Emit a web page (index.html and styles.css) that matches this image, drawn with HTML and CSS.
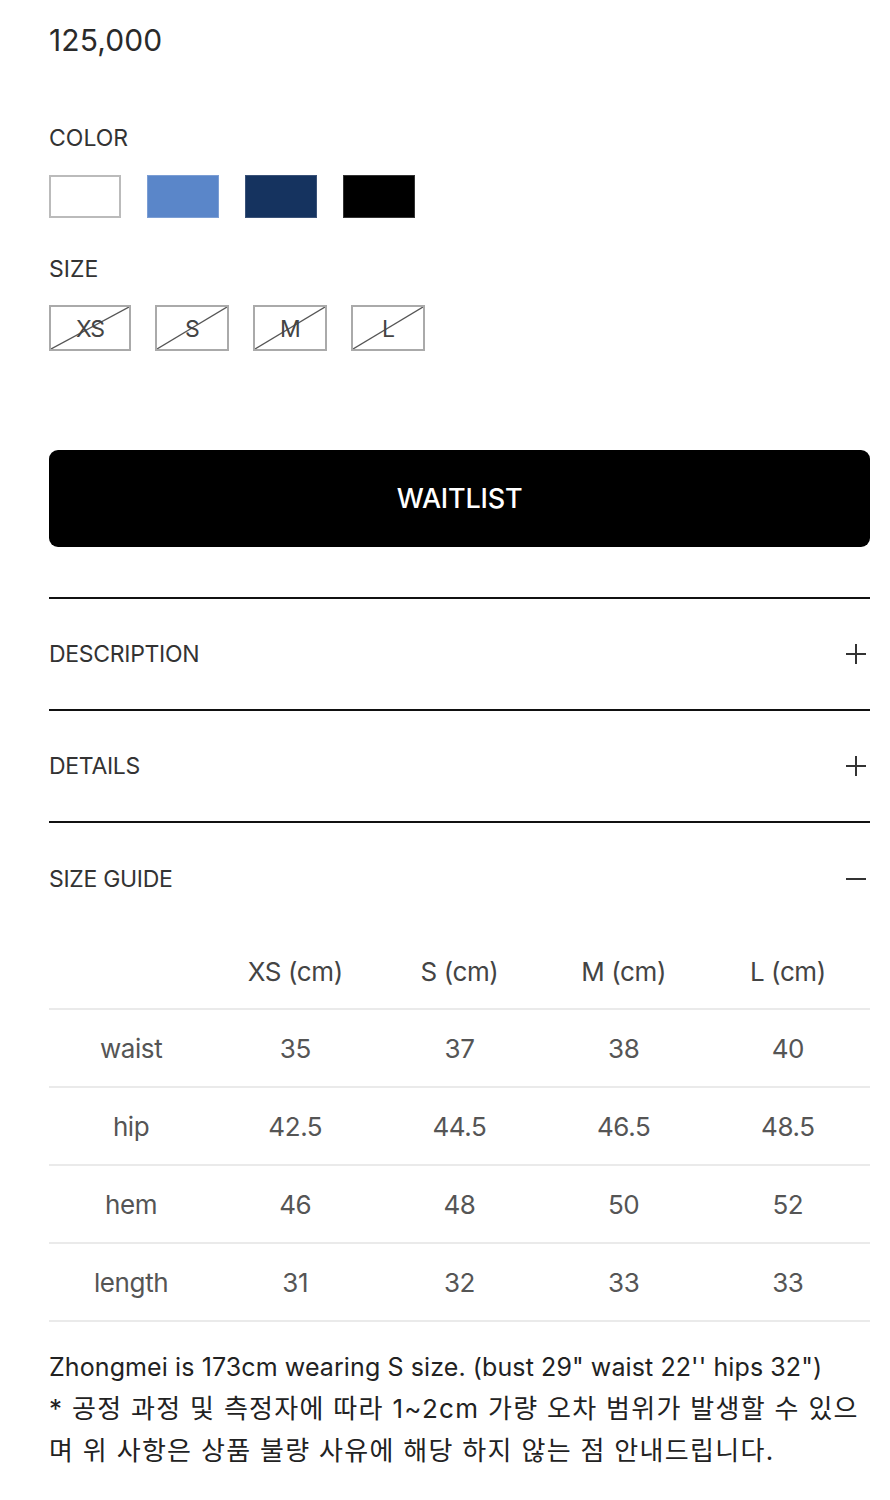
FILE: index.html
```html
<!DOCTYPE html>
<html lang="ko">
<head>
<meta charset="utf-8">
<link rel="stylesheet" href="styles.css">
</head>
<body>
<main class="product">
  <div class="price">125,000</div>

  <div class="opt-label color-label">COLOR</div>
  <div class="swatches">
    <span class="swatch sw-white"></span>
    <span class="swatch sw-blue"></span>
    <span class="swatch sw-navy"></span>
    <span class="swatch sw-black"></span>
  </div>

  <div class="opt-label size-label">SIZE</div>
  <div class="sizes">
    <span class="size size-xs"><svg class="slash" viewBox="0 0 100 100" preserveAspectRatio="none"><line x1="0" y1="100" x2="100" y2="0"/></svg><span class="size-txt">XS</span></span>
    <span class="size"><svg class="slash" viewBox="0 0 100 100" preserveAspectRatio="none"><line x1="0" y1="100" x2="100" y2="0"/></svg><span class="size-txt">S</span></span>
    <span class="size"><svg class="slash" viewBox="0 0 100 100" preserveAspectRatio="none"><line x1="0" y1="100" x2="100" y2="0"/></svg><span class="size-txt">M</span></span>
    <span class="size"><svg class="slash" viewBox="0 0 100 100" preserveAspectRatio="none"><line x1="0" y1="100" x2="100" y2="0"/></svg><span class="size-txt">L</span></span>
  </div>

  <button class="waitlist">WAITLIST</button>

  <section class="acc">
    <div class="acc-head"><span>DESCRIPTION</span><span class="pm plus"></span></div>
  </section>
  <section class="acc">
    <div class="acc-head"><span>DETAILS</span><span class="pm plus"></span></div>
  </section>
  <section class="acc acc-open">
    <div class="acc-head"><span>SIZE GUIDE</span><span class="pm minus"></span></div>
    <table class="guide">
      <thead>
        <tr><th></th><th>XS (cm)</th><th>S (cm)</th><th>M (cm)</th><th>L (cm)</th></tr>
      </thead>
      <tbody>
        <tr><td>waist</td><td>35</td><td>37</td><td>38</td><td>40</td></tr>
        <tr><td>hip</td><td>42.5</td><td>44.5</td><td>46.5</td><td>48.5</td></tr>
        <tr><td>hem</td><td>46</td><td>48</td><td>50</td><td>52</td></tr>
        <tr><td>length</td><td>31</td><td>32</td><td>33</td><td>33</td></tr>
      </tbody>
    </table>
    <p class="note">Zhongmei is 173cm wearing S size. (bust 29" waist 22'' hips 32")<br><span class="ko">* 공정 과정 및 측정자에 따라 1~2cm 가량 오차 범위가 발생할 수 있으며 위 사항은 상품 불량 사유에 해당 하지 않는 점 안내드립니다.</span></p>
  </section>
</main>
</body>
</html>
```

FILE: styles.css
```css
html, body {
  margin: 0;
  padding: 0;
  background: #fff;
}
body {
  font-family: Inter, "Noto Sans CJK KR", sans-serif;
  color: #222;
}
.product {
  width: 821px;
  margin-left: 49px;
  display: flex;
  flex-direction: column;
}
.price {
  font-size: 30px;
  line-height: 40px;
  margin-top: 20px;
  color: #2a2a2a;
  letter-spacing: 0.1px;
}
.opt-label {
  font-size: 23px;
  line-height: 30px;
  color: #333;
  letter-spacing: 0;
}
.color-label { margin-top: 63px; }
.swatches {
  display: flex;
  gap: 26px;
  margin-top: 22px;
}
.swatch {
  width: 72px;
  height: 43px;
  box-sizing: border-box;
  display: block;
}
.sw-white { border: 2px solid #bbb; background: #fff; }
.sw-blue { background: #5a86c9; border: 1px solid #7c9ed4; }
.sw-navy { background: #15335f; border: 1px solid #3a5278; }
.sw-black { background: #000; border: 1px solid #333; }
.size-label { margin-top: 36px; }
.sizes {
  display: flex;
  gap: 24px;
  margin-top: 21px;
}
.size {
  position: relative;
  width: 74px;
  height: 46px;
  box-sizing: border-box;
  border: 2px solid #aaa;
  display: flex;
  align-items: center;
  justify-content: center;
}
.size-xs { width: 82px; }
.slash {
  position: absolute;
  inset: 0;
  width: 100%;
  height: 100%;
}
.slash line {
  stroke: #555;
  stroke-width: 1.3;
  vector-effect: non-scaling-stroke;
}
.size-txt {
  font-size: 23px;
  color: #444;
  letter-spacing: -1px;
  position: relative;
  top: 1px;
}
.waitlist {
  margin-top: 99px;
  height: 97px;
  width: 100%;
  border: none;
  border-radius: 9px;
  background: #000;
  color: #fff;
  font-family: Inter, "Noto Sans CJK KR", sans-serif;
  font-size: 27px;
  font-weight: 500;
  letter-spacing: -0.2px;
  padding: 0;
}
.acc {
  border-top: 2px solid #111;
}
.acc:first-of-type { margin-top: 50px; }
.acc-head {
  height: 110px;
  display: flex;
  align-items: center;
  justify-content: space-between;
  font-size: 23px;
  color: #333;
  letter-spacing: -0.3px;
}
.pm {
  position: relative;
  width: 20px;
  height: 20px;
  margin-right: 4px;
}
.pm::before, .plus::after {
  content: "";
  position: absolute;
  background: #333;
}
.pm::before {
  left: 0;
  top: 9px;
  width: 20px;
  height: 2px;
}
.plus::after {
  left: 9px;
  top: 0;
  width: 2px;
  height: 20px;
}
.acc-open .acc-head { height: 112px; }
.guide {
  width: 100%;
  border-collapse: collapse;
  table-layout: fixed;
  margin-top: 0;
}
.guide th, .guide td {
  text-align: center;
  font-weight: normal;
  font-size: 26px;
  letter-spacing: -0.4px;
  padding: 0;
}
.guide th {
  height: 73px;
  color: #444;
  vertical-align: middle;
  border-bottom: 2px solid #eaeaea;
}
.guide td {
  height: 76px;
  color: #555;
  border-bottom: 2px solid #eaeaea;
}
.note {
  margin: 25px 0 0;
  font-size: 25px;
  line-height: 41px;
  color: #222;
  letter-spacing: 0.1px;
}
.ko {
  font-size: 26px;
  letter-spacing: 1.3px;
}
```
